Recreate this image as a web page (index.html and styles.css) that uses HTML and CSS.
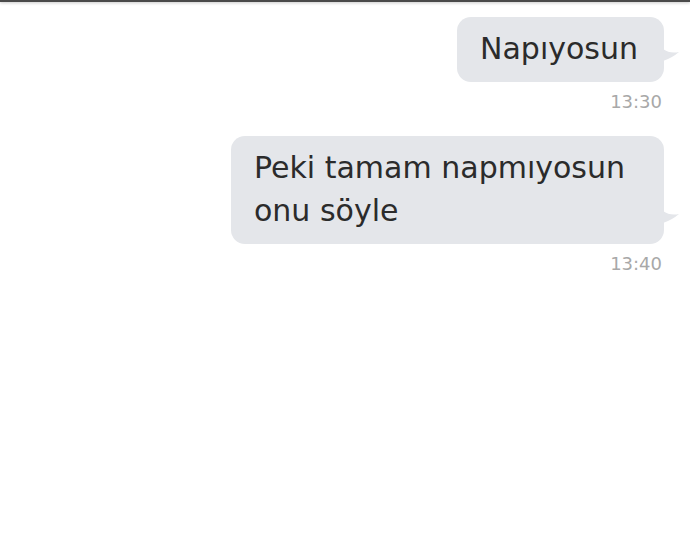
FILE: index.html
```html
<!DOCTYPE html>
<html lang="tr">
<head>
  <meta charset="UTF-8" />
  <meta name="viewport" content="width=device-width, initial-scale=1.0" />
  <title>Mesajlar</title>
  <link rel="stylesheet" href="styles.css">
</head>
<body>
  <div class="topbar"></div>

  <!-- Chat thread -->
  <main class="chat">
    <div class="msg">
      <div class="bubble">
        Napıyosun
        <svg class="tail" width="16" height="14" viewBox="0 0 16 14"><path d="M0 1 Q7 6 16 4 Q9 10 0 13 Z"/></svg>
      </div>
      <div class="time">13:30</div>
    </div>

    <div class="msg">
      <div class="bubble">
        Peki tamam napmıyosun onu söyle
        <svg class="tail" width="16" height="14" viewBox="0 0 16 14"><path d="M0 1 Q7 6 16 4 Q9 10 0 13 Z"/></svg>
      </div>
      <div class="time">13:40</div>
    </div>
  </main>
</body>
</html>
```

FILE: styles.css
```css
body {
  margin: 0;
  background: #fff;
  font-family: "DejaVu Sans", "Liberation Sans", sans-serif;
}
.topbar {
  height: 2px;
  background: #4a4a4a;
  box-shadow: 0 1px 3px rgba(0, 0, 0, 0.25);
}
/* Chat */
.chat {
  padding: 15px 26px 0 0;
  display: flex;
  flex-direction: column;
  gap: 24px;
}
.msg {
  display: flex;
  flex-direction: column;
  align-items: flex-end;
}
.bubble {
  position: relative;
  box-sizing: border-box;
  max-width: 433px;
  padding: 10px 26px 12px 23px;
  background: #e4e6ea;
  border-radius: 14px;
  color: #2b2b2b;
  font-size: 30px;
  line-height: 43px;
}
.tail {
  position: absolute;
  right: -15px;
  bottom: 20px;
  fill: #e4e6ea;
}
.time {
  margin: 10px 2px 0 0;
  color: #a8a8a8;
  font-size: 18px;
  line-height: 20px;
}
```
